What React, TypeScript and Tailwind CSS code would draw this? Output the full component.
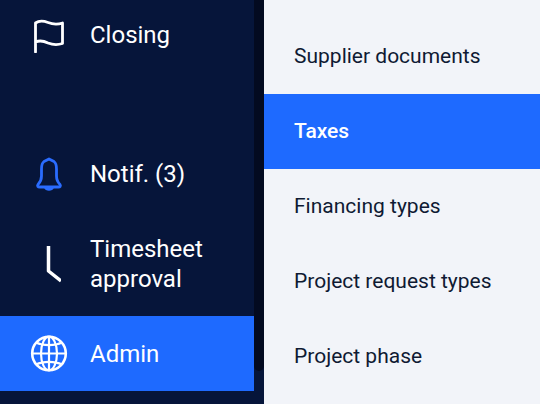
import React from 'react';

// icons are drawn in page coordinates, each viewBox is centred on its row
const FlagIcon = () => (
  <svg width="32" height="36" viewBox="33 17 32 36" fill="none" stroke="#fff" strokeWidth="2.8" strokeLinejoin="round" strokeLinecap="round">
    <path d="M35.500 52V23C39 20.500 44 21 48 22.500C53 24.500 58 24.500 62.500 23V43.500C58 45 53 45 48 43C44 41 39 40.500 35.500 42" />
  </svg>
);

const BellIcon = () => (
  <svg width="30" height="37" viewBox="34 155 30 37" fill="none" stroke="#2a6cff" strokeWidth="2.8" strokeLinejoin="round" strokeLinecap="round">
    <path d="M49 159L44 161.500C42 163 41.500 166 41.500 169V176C41.500 180 39.500 183 38 184.500C37 186 38 187 39.500 187H58.500C60 187 61 186 60 184.500C58.500 183 56.500 180 56.500 176V169C56.500 166 56 163 54 161.500Z" />
    <path d="M45.500 187.500C46.500 190 51.500 190 52.500 187.500" />
  </svg>
);

const ClockHands = () => (
  <svg width="24" height="39" viewBox="37 244 24 39" fill="none" stroke="#fff" strokeWidth="3.5" strokeLinejoin="round">
    <path d="M48.500 246V271L61 281" />
  </svg>
);

const GlobeIcon = () => (
  <svg width="38" height="38" viewBox="30 334.500 38 38" fill="none" stroke="#fff" strokeWidth="2.2">
    <circle cx="49" cy="353" r="16.800" strokeWidth="2.600" />
    <ellipse cx="49" cy="353" rx="8" ry="16.800" />
    <path d="M49 336V370M32 353H66" />
    <path d="M36 342C43 345.500 55 345.500 62 342M36 364C43 360.500 55 360.500 62 364" />
  </svg>
);

const navItems = [
  { label: 'Closing', icon: <FlagIcon />, rowClass: 'h-[70px]' },
  { label: 'Notif. (3)', icon: <BellIcon />, rowClass: 'h-[75px] mt-[66px]' },
  { label: 'Timesheet approval', icon: <ClockHands />, rowClass: 'h-[105px]' },
  { label: 'Admin', icon: <GlobeIcon />, rowClass: 'h-[75px] bg-[#1e6aff]' },
];

const subItems = ['Supplier documents', 'Taxes', 'Financing types', 'Project request types', 'Project phase'];

export default function App() {
  return (
    <div className="flex h-[404px] w-[540px] overflow-hidden bg-[#f2f4f9] font-['Roboto',sans-serif]">
      <div className="flex w-[264px] shrink-0 bg-[#06153a]">
        <nav className="flex w-[254px] shrink-0 flex-col">
          {navItems.map((item) => (
            <div key={item.label} className={`flex shrink-0 items-center ${item.rowClass}`}>
              <div className="flex w-[90px] shrink-0 justify-center pl-[8px]">{item.icon}</div>
              <span className="w-[130px] text-[24px] leading-[30px] text-white">{item.label}</span>
            </div>
          ))}
        </nav>
        {/* scrollbar thumb */}
        <div className="h-[371px] w-[10px] shrink-0 rounded-b-[5px] bg-[#030a20]" />
      </div>
      <div className="flex flex-1 flex-col pt-[19px]">
        {subItems.map((label) => (
          <div
            key={label}
            className={`flex h-[75px] shrink-0 items-center pl-[30px] text-[21px] ${
              label === 'Taxes' ? 'bg-[#1e6aff] font-medium text-white' : 'text-[#0f1a33]'
            }`}
          >
            {label}
          </div>
        ))}
      </div>
    </div>
  );
}
